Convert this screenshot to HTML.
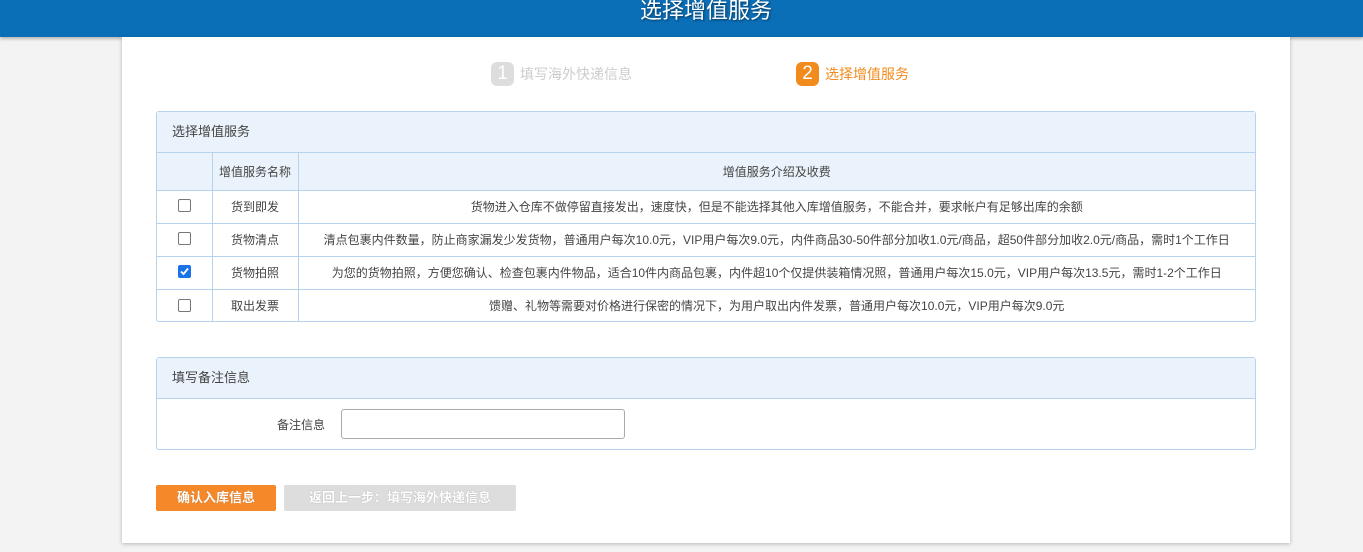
<!DOCTYPE html>
<html><head><meta charset="utf-8"><style>
*{box-sizing:border-box;margin:0;padding:0}
body{width:1363px;height:552px;background:#f3f3f3;font-family:"Liberation Sans","Noto Sans CJK SC",sans-serif;font-size:12px;color:#444;position:relative;overflow:hidden}
.hdr{position:absolute;left:0;top:0;width:1363px;height:37px;background:#0b6fb8;box-shadow:0 2px 3px rgba(0,0,0,.25)}
.hdr h1{position:absolute;left:640px;top:-7px;color:#fff;font-size:22px;font-weight:normal;letter-spacing:0;text-shadow:1px 1px 2px rgba(0,0,0,.5)}
.card{position:absolute;left:122px;top:37px;width:1168px;height:506px;background:#fff;box-shadow:0 1px 4px rgba(0,0,0,.25)}
.step{position:absolute;top:62px;font-size:14px;display:flex;align-items:center}
.step b{display:inline-block;width:23px;height:24px;border-radius:6px;color:#fff;font-size:19px;font-weight:normal;text-align:center;line-height:24px;margin-right:6px}
.panel{position:absolute;left:156px;width:1100px;border:1px solid #b7d2ec;border-radius:3px;background:#fff}
.ph{height:41px;background:#eaf3fb;border-bottom:1px solid #b7d2ec;line-height:40px;padding-left:15px;font-size:13px;color:#444}
table{border-collapse:collapse;width:100%}
td{border-right:1px solid #b7d2ec;border-bottom:1px solid #b7d2ec;text-align:center;height:33px;font-size:12px}
tr td:last-child{border-right:none}
tr:last-child td{border-bottom:none}
tr.th td{height:37px;background:#eaf3fb}
.cb{display:inline-block;width:13px;height:13px;border:1px solid #777;border-radius:2px;background:#fff;vertical-align:middle;margin-top:-3px}
.cb.on{background:#1a73e8;border-color:#1a73e8;position:relative}
.btn{position:absolute;top:485px;height:26px;border-radius:2px;color:#fff;font-size:13px;font-weight:bold;text-align:center;line-height:26px;text-shadow:0 0 1px rgba(0,0,0,.3)}
</style></head><body>
<div class="hdr"><h1>选择增值服务</h1></div>
<div class="card"></div>
<div class="step" style="left:491px;color:#ccc"><b style="background:#ddd">1</b>填写海外快递信息</div>
<div class="step" style="left:796px;color:#f18b1d"><b style="background:#f18b1d">2</b>选择增值服务</div>
<div class="panel" style="top:111px;height:211px">
<div class="ph">选择增值服务</div>
<table>
<tr class="th"><td style="width:55px"></td><td style="width:86px">增值服务名称</td><td>增值服务介绍及收费</td></tr>
<tr><td><span class="cb"></span></td><td>货到即发</td><td>货物进入仓库不做停留直接发出，速度快，但是不能选择其他入库增值服务，不能合并，要求帐户有足够出库的余额</td></tr>
<tr><td><span class="cb"></span></td><td>货物清点</td><td>清点包裹内件数量，防止商家漏发少发货物，普通用户每次10.0元，VIP用户每次9.0元，内件商品30-50件部分加收1.0元/商品，超50件部分加收2.0元/商品，需时1个工作日</td></tr>
<tr><td><span class="cb on"><svg width="11" height="11" viewBox="0 0 11 11" style="position:absolute;left:0;top:0"><path d="M2 5.5 L4.5 8 L9 2.5" stroke="#fff" stroke-width="1.8" fill="none"/></svg></span></td><td>货物拍照</td><td>为您的货物拍照，方便您确认、检查包裹内件物品，适合10件内商品包裹，内件超10个仅提供装箱情况照，普通用户每次15.0元，VIP用户每次13.5元，需时1-2个工作日</td></tr>
<tr><td><span class="cb"></span></td><td>取出发票</td><td>馈赠、礼物等需要对价格进行保密的情况下，为用户取出内件发票，普通用户每次10.0元，VIP用户每次9.0元</td></tr>
</table></div>
<div class="panel" style="top:357px;height:93px">
<div class="ph">填写备注信息</div>
<div style="position:absolute;left:120px;top:58px;font-size:12px">备注信息</div>
<div style="position:absolute;left:184px;top:51px;width:284px;height:30px;border:1px solid #aaa;border-radius:3px"></div>
</div>
<div class="btn" style="left:156px;width:120px;background:#f5892a">确认入库信息</div>
<div class="btn" style="left:284px;width:232px;background:#ddd">返回上一步：填写海外快递信息</div>
</body></html>
